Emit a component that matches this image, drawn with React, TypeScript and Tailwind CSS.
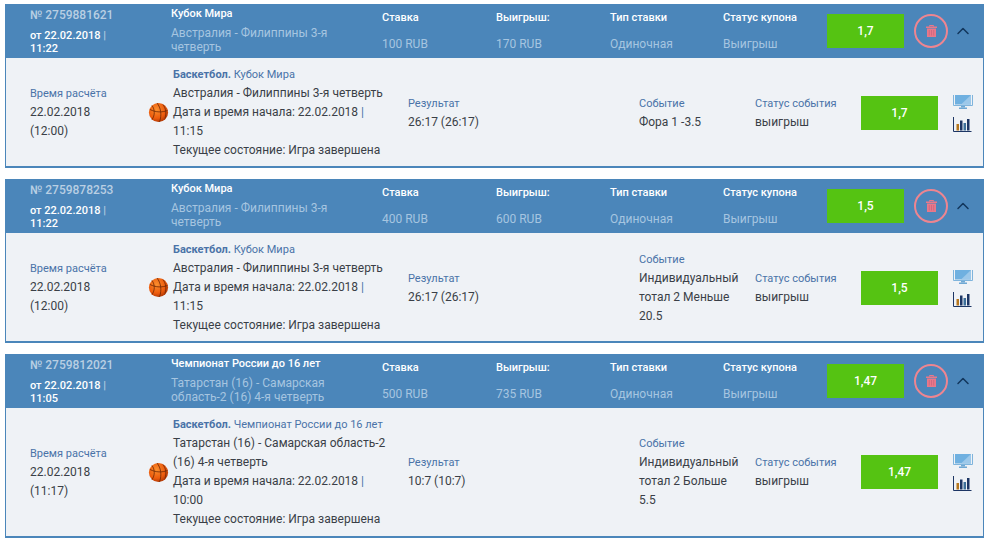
import React from 'react';
import { ChevronUp } from 'lucide-react';

interface Bet {
  id: string;
  date: string;
  time: string;
  league: string;
  match: string;
  stake: string;
  win: string;
  odds: string;
  calcTime: string;
  start: string;
  score: string;
  event: string;
  detailHeight: string;
  rightShift: string;
}

const bets: Bet[] = [
  {
    id: '2759881621', date: '22.02.2018', time: '11:22', league: 'Кубок Мира',
    match: 'Австралия - Филиппины 3-я четверть', stake: '100 RUB', win: '170 RUB', odds: '1,7',
    calcTime: '(12:00)', start: '11:15', score: '26:17 (26:17)', event: 'Фора 1 -3.5',
    detailHeight: 'h-[110px]', rightShift: 'mt-[2px]',
  },
  {
    id: '2759878253', date: '22.02.2018', time: '11:22', league: 'Кубок Мира',
    match: 'Австралия - Филиппины 3-я четверть', stake: '400 RUB', win: '600 RUB', odds: '1,5',
    calcTime: '(12:00)', start: '11:15', score: '26:17 (26:17)', event: 'Индивидуальный тотал 2 Меньше 20.5',
    detailHeight: 'h-[110px]', rightShift: 'mt-[2px]',
  },
  {
    id: '2759812021', date: '22.02.2018', time: '11:05', league: 'Чемпионат России до 16 лет',
    match: 'Татарстан (16) - Самарская область-2 (16) 4-я четверть', stake: '500 RUB', win: '735 RUB', odds: '1,47',
    calcTime: '(11:17)', start: '10:00', score: '10:7 (10:7)', event: 'Индивидуальный тотал 2 Больше 5.5',
    detailHeight: 'h-[130px]', rightShift: 'mt-0',
  },
];

const Ball = () => (
  <svg width="21" height="21" viewBox="0 0 21 21" className="shrink-0">
    <defs>
      <radialGradient id="ball" cx="40%" cy="35%" r="70%">
        <stop offset="0%" stopColor="#fb8f2e" />
        <stop offset="65%" stopColor="#ec5a0c" />
        <stop offset="100%" stopColor="#a93405" />
      </radialGradient>
    </defs>
    <circle cx="10.5" cy="10.5" r="9.6" fill="url(#ball)" />
    <path d="M2 7.5c6 3 12 3 17.5 1M9 1c4 5 5 12 2.500 19M4 3.500c3 4 3 10 0 14M15 2.500c3 4 3.500 9 2 14" fill="none" stroke="#6b2404" strokeWidth="0.8" />
  </svg>
);

const Monitor = () => (
  <svg width="20" height="14" viewBox="0 0 20 14">
    <path d="M0.500 0v10.500h19V0" fill="none" stroke="#7fb4dc" strokeWidth="1" />
    <rect x="2" y="0" width="16" height="9.500" fill="#6fb0e0" />
    <path d="M8 9.500L18 0v9.500z" fill="#9cc8ea" />
    <rect x="8" y="11" width="4" height="1.500" fill="#6fa8d4" />
    <rect x="6" y="12.500" width="8" height="1.500" fill="#6fa8d4" />
  </svg>
);

const Chart = () => (
  <svg width="19" height="15" viewBox="0 0 19 15">
    <path d="M0.500 0v14.500H18.500" fill="none" stroke="#1c3564" strokeWidth="1" />
    <rect x="3.500" y="7" width="2.500" height="6.500" fill="#b5771f" />
    <rect x="7" y="3.500" width="2.500" height="10" fill="#1c3564" />
    <rect x="10.500" y="6" width="2.500" height="7.500" fill="#3d6f99" />
    <rect x="14" y="2" width="2.500" height="11.500" fill="#1c3564" />
  </svg>
);

const Bin = () => (
  <svg width="11" height="12" viewBox="0 0 11 12">
    <path d="M3.500 1.500V0.500h4v1" fill="none" stroke="#e8788a" strokeWidth="1" />
    <rect x="0" y="1.500" width="11" height="1.500" fill="#e8788a" />
    <rect x="1" y="3.500" width="9" height="8.500" fill="#e8788a" />
    <path d="M3.300 5v5.500M5.500 5v5.500M7.700 5v5.500" stroke="#c9657f" strokeWidth="0.8" />
  </svg>
);

const HeaderCol = ({ label, value, className }: { label: string; value: string; className: string }) => (
  <div className={`flex flex-col pt-[6px] ${className}`}>
    <span className="text-[11px] font-medium leading-[16px] text-white">{label}</span>
    <span className="mt-[10px] leading-[16px] text-[#a6c5e0]">{value}</span>
  </div>
);

const BetCard = ({ bet }: { bet: Bet }) => (
  <div className="ml-[5px] w-[979px]">
    <div className="flex h-[54px] items-start bg-[#4b86ba] text-[12px]">
      <div className="w-[166px] shrink-0 pl-[25px] pt-[3px] font-medium">
        <div className="pb-[6px] leading-[16px] text-[#b9cfe3]">№ {bet.id}</div>
        <div className="w-[85px] text-[11px] leading-[13px] text-white">
          от {bet.date} <span className="text-[#b9cfe3]">|</span> {bet.time}
        </div>
      </div>
      <div className="w-[211px] shrink-0 pt-[2px]">
        <div className="mb-[4px] text-[11px] font-medium leading-[16px] text-white">{bet.league}</div>
        <div className="w-[170px] leading-[14px] text-[#a6c5e0]">{bet.match}</div>
      </div>
      <HeaderCol label="Ставка" value={bet.stake} className="w-[114px] shrink-0" />
      <HeaderCol label="Выигрыш:" value={bet.win} className="w-[114px] shrink-0" />
      <HeaderCol label="Тип ставки" value="Одиночная" className="w-[113px] shrink-0" />
      <HeaderCol label="Статус купона" value="Выигрыш" className="w-[104px] shrink-0" />
      <div className="mt-[10px] flex h-[34px] w-[77px] shrink-0 items-center justify-center bg-[#55c312] font-medium text-white">
        {bet.odds}
      </div>
      <div className="ml-[10px] mt-[10px] flex h-[34px] w-[34px] shrink-0 items-center justify-center rounded-full border-2 border-[#ee8590]">
        <Bin />
      </div>
      <ChevronUp size={20} strokeWidth={1.8} className="ml-[5px] mt-[17px] text-[#12365c]" />
    </div>
    <div className={`flex items-center border-x border-b-2 border-[#4b86ba] bg-[#eff2f6] text-[12px] leading-[19px] text-[#3a3f47] ${bet.detailHeight}`}>
      <div className="w-[142px] shrink-0 pl-[24px]">
        <div className="text-[11px] text-[#4a73a8]">Время расчёта</div>
        <div>{bet.date}</div>
        <div>{bet.calcTime}</div>
      </div>
      <Ball />
      <div className="ml-[4px] w-[214px] shrink-0">
        <div className="text-[11px] text-[#4a73a8]"><span className="font-bold">Баскетбол.</span> {bet.league}</div>
        <div>{bet.match}</div>
        <div>Дата и время начала: {bet.date} <span className="text-[#4a73a8]">|</span> {bet.start}</div>
        <div>Текущее состояние: Игра завершена</div>
      </div>
      <div className={`flex items-center ${bet.rightShift}`}>
        <div className="ml-[21px] w-[231px] shrink-0">
          <div className="text-[11px] text-[#4a73a8]">Результат</div>
          <div>{bet.score}</div>
        </div>
        <div className="w-[116px] shrink-0 pr-[12px]">
          <div className="text-[11px] text-[#4a73a8]">Событие</div>
          <div>{bet.event}</div>
        </div>
        <div className="w-[106px] shrink-0">
          <div className="text-[11px] text-[#4a73a8]">Статус события</div>
          <div>выигрыш</div>
        </div>
        <div className="flex h-[34px] w-[77px] shrink-0 items-center justify-center bg-[#55c312] font-medium text-white">
          {bet.odds}
        </div>
        <div className="ml-[15px] flex flex-col gap-[8px]">
          <Monitor />
          <Chart />
        </div>
      </div>
    </div>
  </div>
);

export default function App() {
  return (
    <div className="flex h-[540px] w-[992px] flex-col gap-[11px] overflow-hidden bg-white pt-[4px] font-['Roboto',sans-serif]">
      {bets.map(bet => <BetCard key={bet.id} bet={bet} />)}
    </div>
  );
}
